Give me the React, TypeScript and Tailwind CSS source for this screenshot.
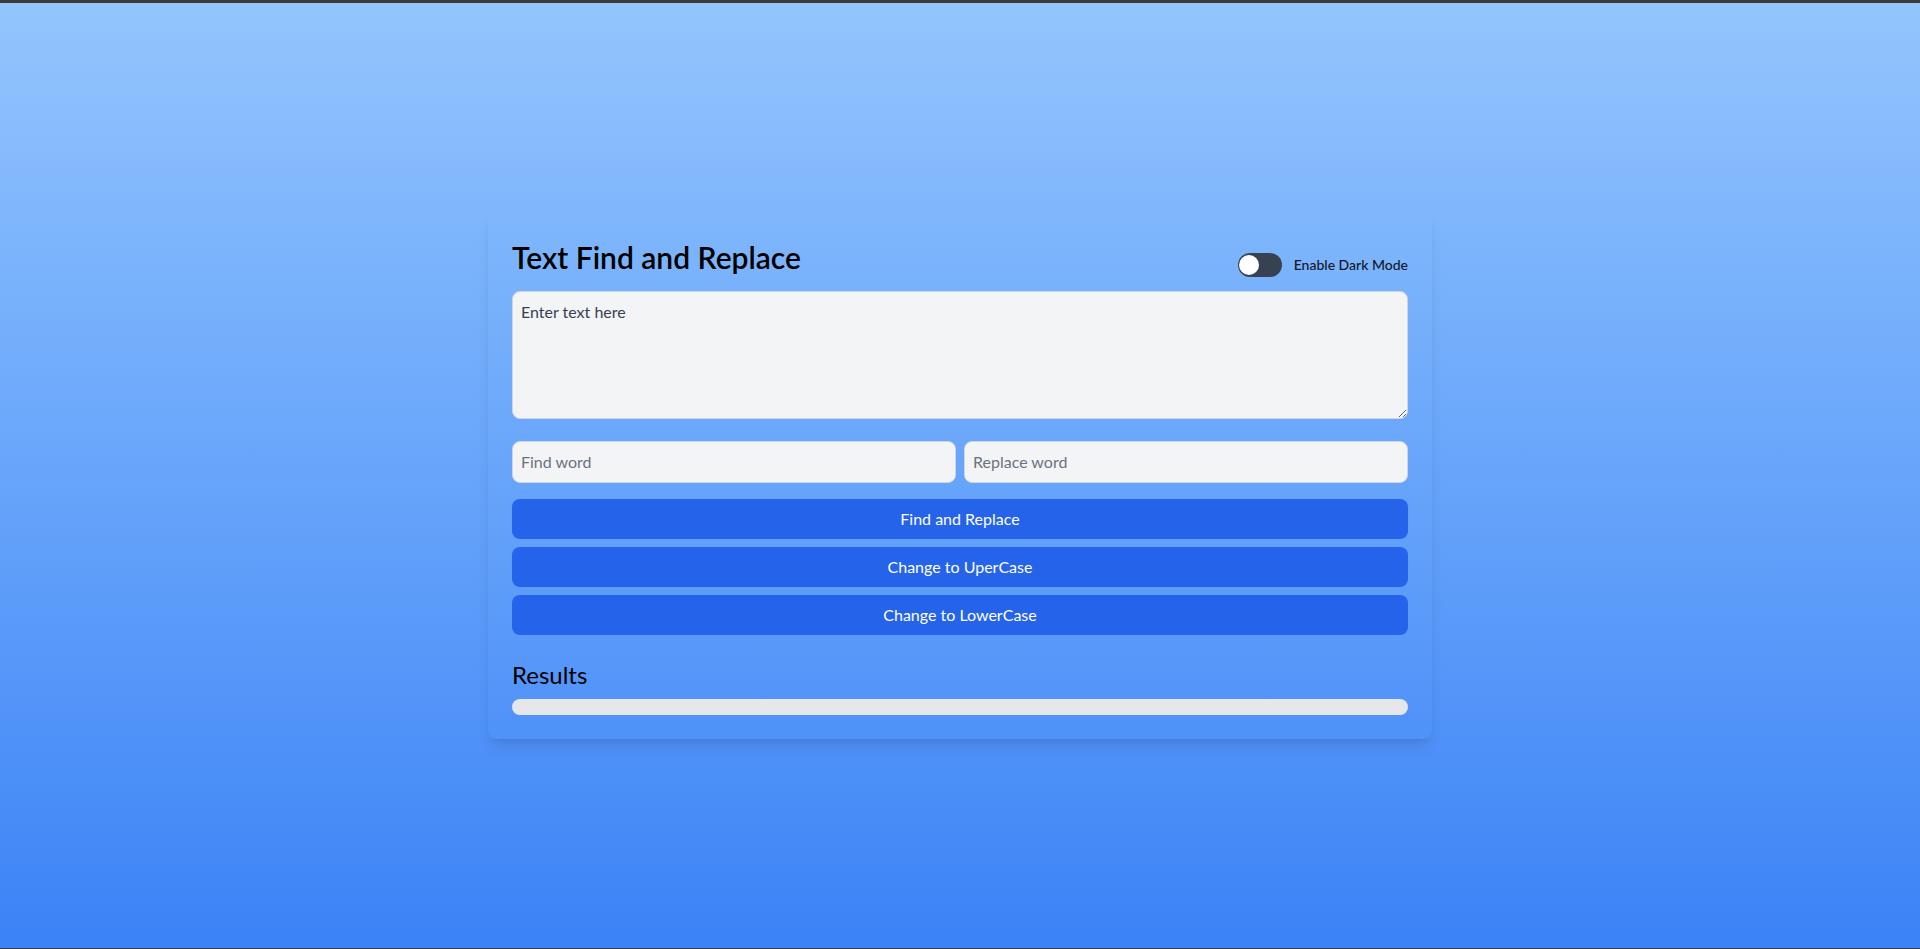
import { useState } from "react"

export default function App() {
  const [text, setText] = useState("")
  const [findWord, setFindWord] = useState("")
  const [replaceWord, setReplaceWord] = useState("")
  const [dark, setDark] = useState(false)

  return (
    <div
      className="flex min-h-screen items-center justify-center border-t-[3px] border-b border-[#3b3b3b] bg-gradient-to-b from-[#93c5fd] to-[#3b82f6]"
      style={{ fontFamily: "Lato, 'Noto Sans', sans-serif" }}
    >
      <div className="w-[944px] rounded-lg p-6 shadow-lg">
        <div className="mb-[14px] flex items-start justify-between">
          <h2 className="pt-[2px] text-3xl font-semibold text-black">Text Find and Replace</h2>
          <label className="mt-4 flex cursor-pointer items-center">
            <button
              type="button"
              onClick={() => setDark(!dark)}
              className="relative h-6 w-11 rounded-full bg-[#374151]"
            >
              <span className="absolute top-[2px] left-[1px] h-5 w-5 rounded-full bg-white" />
            </button>
            <span className="ml-3 text-sm font-medium text-[#111827]">Enable Dark Mode</span>
          </label>
        </div>

        <textarea
          value={text}
          onChange={(e) => setText(e.target.value)}
          placeholder="Enter text here"
          className="mb-[22px] block h-32 w-full rounded-lg border border-[#d1d5db] bg-[#f3f4f6] p-2 text-base text-[#1f2937] placeholder:text-[#374151]"
        />

        <div className="mb-4 flex gap-2">
          <input
            value={findWord}
            onChange={(e) => setFindWord(e.target.value)}
            placeholder="Find word"
            className="w-full rounded-lg border border-[#d1d5db] bg-[#f3f4f6] p-2 text-base placeholder:text-[#6b7280]"
          />
          <input
            value={replaceWord}
            onChange={(e) => setReplaceWord(e.target.value)}
            placeholder="Replace word"
            className="w-full rounded-lg border border-[#d1d5db] bg-[#f3f4f6] p-2 text-base placeholder:text-[#6b7280]"
          />
        </div>

        <div className="flex flex-col gap-2">
          <button className="w-full rounded-lg bg-[#2563eb] py-2 text-base text-white">Find and Replace</button>
          <button className="w-full rounded-lg bg-[#2563eb] py-2 text-base text-white">Change to UperCase</button>
          <button className="w-full rounded-lg bg-[#2563eb] py-2 text-base text-white">Change to LowerCase</button>
        </div>

        <div className="mt-6">
          <h3 className="mb-2 text-2xl text-black">Results</h3>
          <div className="h-4 w-full rounded-full bg-[#e5e7eb]" />
        </div>
      </div>
    </div>
  )
}
